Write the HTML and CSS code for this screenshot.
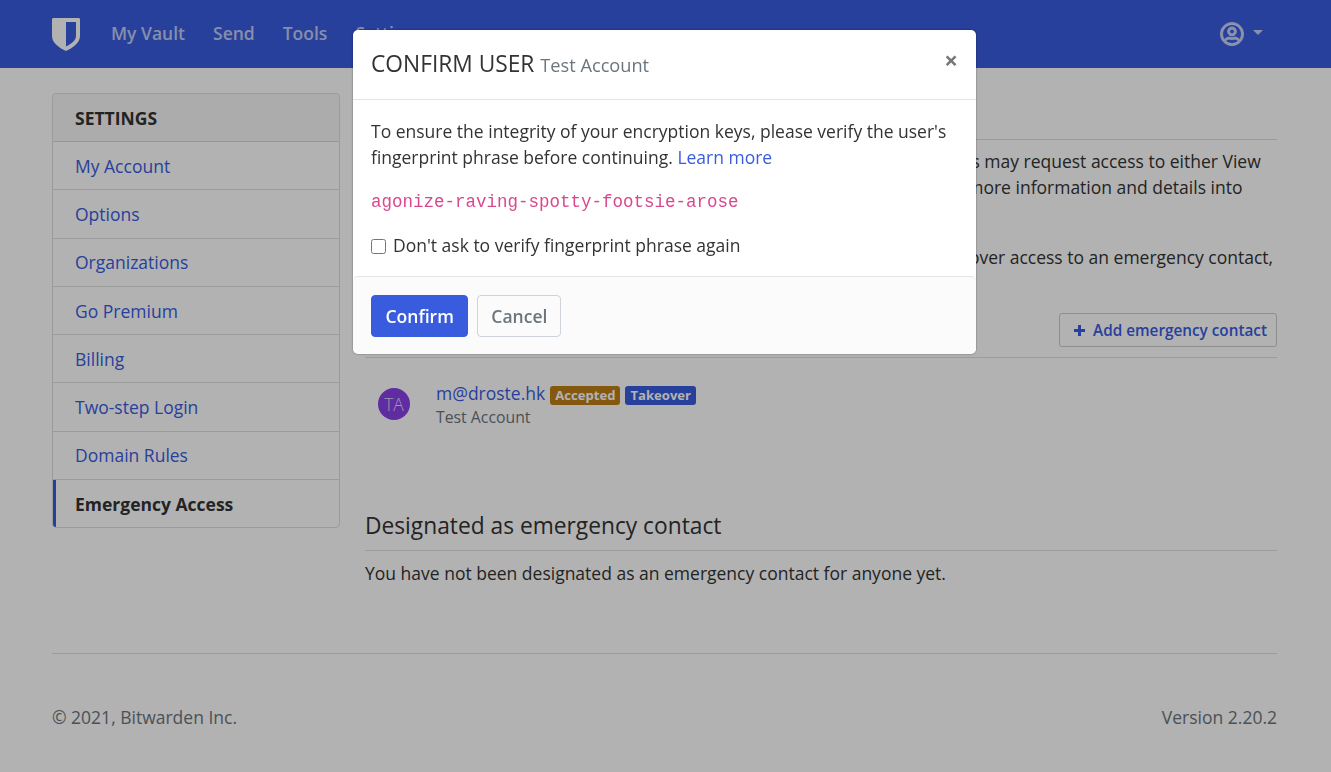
FILE: index.html
```html
<!DOCTYPE html>
<html lang="en">
<head>
    <meta charset="UTF-8">
    <meta name="viewport" content="width=device-width, initial-scale=1.0">
    <title>Emergency Access</title>
    <link rel="stylesheet" href="styles.css">
</head>
<body>
    <nav class="navbar">
        <svg class="logo" viewBox="0 0 28 33" aria-hidden="true">
            <path fill-rule="evenodd" d="M1.500 0H26.500C27.300 0 28 .7 28 1.500V18C28 25 20.500 30 14 33C7.500 30 0 25 0 18V1.500C0 .7.7 0 1.500 0ZM14 4V28.500C19 26 24 22.500 24 18V4Z"/>
        </svg>
        <a href="#" class="nav-link">My Vault</a>
        <a href="#" class="nav-link">Send</a>
        <a href="#" class="nav-link">Tools</a>
        <a href="#" class="nav-link">Settings</a>
        <div class="nav-user">
            <svg class="user-icon" viewBox="0 0 496 512" aria-hidden="true">
                <path d="M248 104c-53 0-96 43-96 96s43 96 96 96 96-43 96-96-43-96-96-96zm0 144c-26.500 0-48-21.500-48-48s21.500-48 48-48 48 21.500 48 48-21.500 48-48 48zm0-240C111 8 0 119 0 256s111 248 248 248 248-111 248-248S385 8 248 8zm0 448c-49.700 0-95.100-18.300-130.100-48.400 14.900-23 40.400-38.600 69.600-39.500 20.800 6.400 40.600 9.600 60.500 9.600s39.700-3.100 60.500-9.600c29.200 1 54.700 16.500 69.600 39.500-35 30.100-80.400 48.400-130.100 48.400zm162.700-84.100c-24.400-31.400-62.100-51.900-105.100-51.900-10.200 0-26 9.600-57.600 9.600-31.500 0-47.400-9.600-57.600-9.600-42.900 0-80.600 20.500-105.100 51.900C61.900 339.200 48 299.200 48 256c0-110.300 89.700-200 200-200s200 89.700 200 200c0 43.200-13.900 83.200-37.300 115.900z"/>
            </svg>
            <span class="caret"></span>
        </div>
    </nav>

    <div class="container">
        <aside class="card">
            <div class="card-header">SETTINGS</div>
            <a href="#" class="list-item">My Account</a>
            <a href="#" class="list-item">Options</a>
            <a href="#" class="list-item">Organizations</a>
            <a href="#" class="list-item">Go Premium</a>
            <a href="#" class="list-item">Billing</a>
            <a href="#" class="list-item">Two-step Login</a>
            <a href="#" class="list-item">Domain Rules</a>
            <a href="#" class="list-item active">Emergency Access</a>
        </aside>

        <main class="content">
            <div class="page-header">
                <h1>Emergency Access</h1>
            </div>
            <p class="intro">Grant and manage emergency access for trusted contacts. Trusted contacts may request access to either View<br>or Takeover your account in case of an emergency. Visit our help page for more information and details into<br>how zero knowledge sharing works.</p>
            <p class="intro">Note: Only the premium members may invite users and grant view or takeover access to an emergency contact,<br>even without a premium plan.</p>

            <div class="section-header">
                <h2>Trusted emergency contacts</h2>
                <button class="btn-add">
                    <svg class="plus" viewBox="0 0 11 11" aria-hidden="true"><path d="M4 0H7V4H11V7H7V11H4V7H0V4H4Z"/></svg>
                    Add emergency contact
                </button>
            </div>
            <div class="contact">
                <div class="avatar">TA</div>
                <div>
                    <div class="contact-line">
                        <a href="#" class="contact-mail">m@droste.hk</a>
                        <span class="badge badge-warning">Accepted</span>
                        <span class="badge badge-primary">Takeover</span>
                    </div>
                    <div class="contact-name">Test Account</div>
                </div>
            </div>

            <div class="section-header designated">
                <h2>Designated as emergency contact</h2>
            </div>
            <p class="none-yet">You have not been designated as an emergency contact for anyone yet.</p>
        </main>
    </div>

    <footer class="footer">
        <span>© 2021, Bitwarden Inc.</span>
        <span>Version 2.20.2</span>
    </footer>

    <!-- Modal -->
    <div class="backdrop"></div>
    <div class="modal">
        <div class="modal-header">
            <h3>CONFIRM USER <small>Test Account</small></h3>
            <span class="close">×</span>
        </div>
        <div class="modal-body">
            <p>To ensure the integrity of your encryption keys, please verify the user's fingerprint phrase before continuing. <a href="#">Learn more</a></p>
            <p class="phrase"><code>agonize-raving-spotty-footsie-arose</code></p>
            <label class="check"><input type="checkbox"> Don't ask to verify fingerprint phrase again</label>
        </div>
        <div class="modal-footer">
            <button class="btn-primary">Confirm</button>
            <button class="btn-cancel">Cancel</button>
        </div>
    </div>
</body>
</html>
```

FILE: styles.css
```css
* {
    margin: 0;
    padding: 0;
    box-sizing: border-box;
}

body {
    font-family: 'Open Sans', sans-serif;
    font-size: 17.500px;
    line-height: 25.760px;
    color: #333;
    background-color: #fff;
    height: 772px;
    overflow: hidden;
}

a {
    color: #395cde;
    text-decoration: none;
}

.navbar {
    display: flex;
    align-items: center;
    height: 68px;
    padding: 0 68px 0 52px;
    background-color: #395cde;
}

.logo {
    width: 28px;
    height: 33px;
    margin-right: 31px;
    fill: #fff;
}

.nav-link {
    color: rgba(255, 255, 255, 0.7);
    font-weight: 600;
    margin-right: 28px;
}

.nav-user {
    display: flex;
    align-items: center;
    margin-left: auto;
    color: rgba(255, 255, 255, 0.7);
}

.user-icon {
    width: 24px;
    height: 24px;
    fill: currentColor;
    stroke: currentColor;
    stroke-width: 14;
    overflow: visible;
}

.caret {
    width: 0;
    height: 0;
    margin-left: 9px;
    margin-bottom: 3px;
    border-top: 5px solid currentColor;
    border-left: 5px solid transparent;
    border-right: 5px solid transparent;
}

.container {
    display: grid;
    grid-template-columns: 288px 1fr;
    gap: 25px;
    margin: 25px 54px 0 52px;
}

.card {
    align-self: start;
    border: 1px solid rgba(0, 0, 0, 0.125);
    border-radius: 4px;
    overflow: hidden;
}

.card-header {
    height: 48.100px;
    padding: 12px 22px;
    font-weight: 700;
    line-height: 24px;
    background-color: rgba(0, 0, 0, 0.03);
    border-bottom: 1px solid rgba(0, 0, 0, 0.125);
}

.list-item {
    display: block;
    height: 48.250px;
    padding: 11.700px 22px 0;
    line-height: 24px;
    border-bottom: 1px solid rgba(0, 0, 0, 0.125);
}

.list-item.active {
    height: 47px;
    color: #333;
    font-weight: 700;
    border-bottom: none;
    border-left: 3px solid #395cde;
    padding-left: 19px;
}

.page-header {
    height: 47px;
    padding-top: 6px;
    border-bottom: 1px solid rgba(0, 0, 0, 0.125);
    margin-bottom: 9px;
}

.page-header h1, .section-header h2 {
    font-size: 22.750px;
    font-weight: 400;
    line-height: 28px;
}

.intro {
    margin-bottom: 18.500px;
}

.section-header {
    display: flex;
    justify-content: space-between;
    align-items: flex-end;
    margin-top: -1.500px;
    padding-bottom: 10px;
    border-bottom: 1px solid rgba(0, 0, 0, 0.125);
}

.btn-add {
    display: flex;
    align-items: center;
    gap: 8px;
    height: 34px;
    padding: 0 9px 0 14px;
    font-family: inherit;
    font-size: 15.300px;
    font-weight: 600;
    color: #395cde;
    background: none;
    border: 1px solid rgba(0, 0, 0, 0.2);
    border-radius: 3px;
}

.plus {
    width: 11px;
    height: 11px;
    fill: currentColor;
}

.contact {
    display: flex;
    align-items: center;
    gap: 26px;
    padding: 24px 0 0 13px;
}

.avatar {
    width: 32px;
    height: 32px;
    margin-bottom: 2px;
    border-radius: 50%;
    background-color: #8a3fe8;
    color: rgba(255, 255, 255, 0.8);
    font-size: 17.500px;
    font-weight: 300;
    text-align: center;
    line-height: 32px;
}

.contact-line {
    display: flex;
    align-items: center;
    gap: 5px;
    height: 24px;
    line-height: 24px;
}

.contact-mail {
    margin-bottom: 2px;
}

.contact-name {
    color: #6c757d;
    font-size: 15.800px;
    line-height: 22px;
}

.badge {
    margin-top: 2px;
    padding: 0 5px;
    font-size: 13.100px;
    font-weight: 700;
    line-height: 19px;
    color: #fff;
    border-radius: 3px;
}

.badge-warning {
    background-color: #bf7e16;
}

.badge-primary {
    background-color: #395cde;
}

.designated {
    margin-top: 84px;
    padding-bottom: 10px;
}

.none-yet {
    margin-top: 10px;
}

.footer {
    position: absolute;
    left: 52px;
    right: 54px;
    top: 653px;
    display: flex;
    justify-content: space-between;
    padding-top: 51px;
    color: #6c757d;
    border-top: 1px solid rgba(0, 0, 0, 0.125);
}

/* Modal Styles */
.backdrop {
    position: fixed;
    top: 0;
    left: 0;
    width: 100%;
    height: 100%;
    background-color: rgba(0, 0, 0, 0.3);
}

.modal {
    position: fixed;
    top: 30px;
    left: 353px;
    width: 623px;
    height: 324px;
    background: #fff;
    border-radius: 5px;
    box-shadow: 0 0 2px rgba(0, 0, 0, 0.5);
    overflow: hidden;
}

.modal-header {
    display: flex;
    justify-content: space-between;
    height: 70px;
    padding: 18px 18px 0;
    border-bottom: 1px solid #e4e4e4;
}

.modal-header h3 {
    padding-top: 1px;
    font-size: 22.750px;
    font-weight: 400;
    line-height: 30px;
}

.modal-header small {
    font-size: 18.200px;
    color: #6c757d;
}

.close {
    font-size: 24px;
    font-weight: 700;
    line-height: 24px;
    color: #777;
}

.modal-body {
    height: 176px;
    padding: 19px 18px 0;
}

.modal-body p {
    margin-bottom: 17px;
}

.modal-body .phrase {
    margin-bottom: 18px;
}

code {
    font-family: 'Liberation Mono', monospace;
    font-size: 17.500px;
    color: #d9488d;
}

.check {
    display: flex;
    align-items: center;
    gap: 7px;
}

.check input {
    width: 15px;
    height: 15px;
}

.modal-footer {
    display: flex;
    gap: 9px;
    height: 78px;
    padding: 18px;
    background-color: #fbfbfb;
    border-top: 1px solid #e4e4e4;
    border-radius: 5px;
}

.modal-footer button {
    height: 42px;
    padding: 0 13.500px;
    font-family: inherit;
    font-size: 17.500px;
    font-weight: 600;
    border-radius: 4px;
}

.btn-primary {
    color: #fff;
    background-color: #395cde;
    border: 1px solid #395cde;
}

.modal-footer .btn-cancel {
    padding: 0 13px;
    color: #6c757d;
    background-color: #fbfbfb;
    border: 1px solid #ced4da;
}
```
